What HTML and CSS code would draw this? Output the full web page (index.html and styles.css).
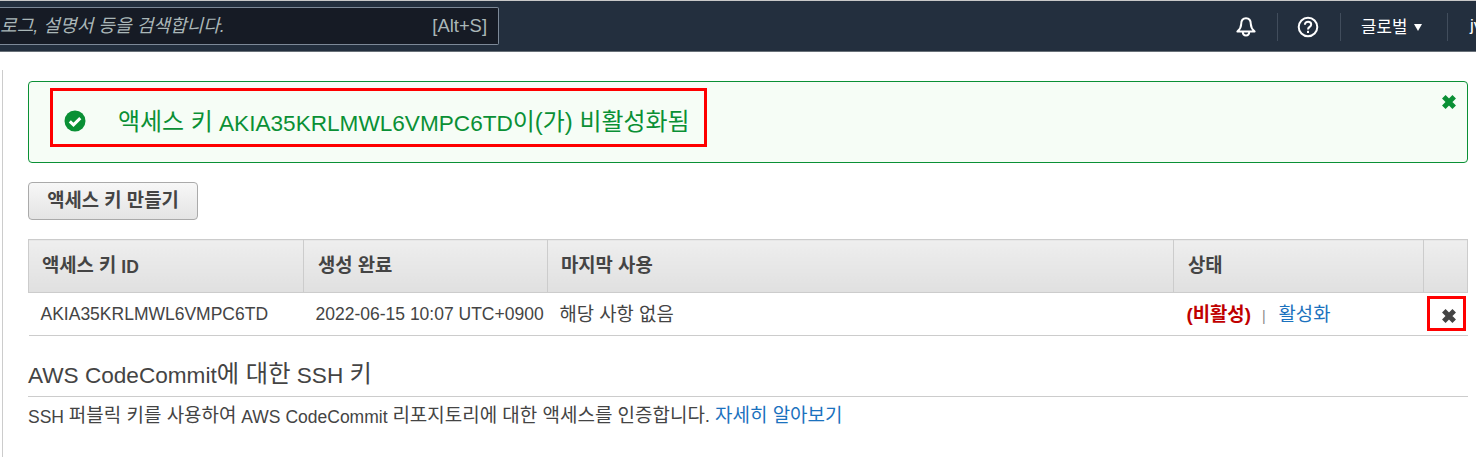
FILE: index.html
```html
<!DOCTYPE html>
<html lang="ko">
<head>
<meta charset="utf-8">
<title>액세스 키</title>
<link rel="stylesheet" href="styles.css">
</head>
<body>
<header class="nav">
  <div class="search">
    <em class="search-text">로그, 설명서 등을 검색합니다.</em>
    <span class="search-hint">[Alt+S]</span>
  </div>
  <div class="nav-items">
    <span class="nav-item bell">
      <svg width="22" height="22" viewBox="0 0 22 22" fill="none" stroke="#fff" stroke-width="2"><path d="M11 2.200c-3.300 0-4.800 2.600-4.800 5.800 0 3.200-1 5-3.800 7.500h17.200c-2.800-2.500-3.800-4.300-3.800-7.500 0-3.200-1.500-5.800-4.800-5.800z" stroke-linejoin="round"/><path d="M7.800 15.800c0 2.200 1.400 3.700 3.200 3.700s3.200-1.500 3.200-3.700"/></svg>
    </span>
    <span class="nav-item help">
      <svg width="22" height="22" viewBox="0 0 22 22" fill="none" stroke="#fff"><circle cx="11" cy="11" r="9.300" stroke-width="2"/><path d="M7.900 8.700c0-1.900 1.400-3 3.200-3s3.100 1.100 3.100 2.700c0 2.500-3.200 2.400-3.200 5" stroke-width="2"/><rect x="10" y="14.800" width="2" height="2.200" fill="#fff" stroke="none"/></svg>
    </span>
    <span class="nav-item region"><span class="region-name">글로벌</span><i class="caret"></i></span>
    <span class="nav-item user">jv</span>
  </div>
</header>
<main class="content">
  <section class="alert">
    <div class="alert-msg">
      <svg class="alert-icon" width="22" height="22" viewBox="0 0 22 22"><circle cx="11" cy="11" r="10.500" fill="#0a9035"/><path d="M5.800 11.300l3.700 3.600 6.800-6.800" fill="none" stroke="#fff" stroke-width="3"/></svg>
      <span class="alert-text"><span class="ko">액세스 키</span> AKIA35KRLMWL6VMPC6TD<span class="ko">이(가) 비활성화됨</span></span>
    </div>
    <svg class="x-green" width="16" height="16" viewBox="0 0 16 16"><path d="M2.800 2.800l10.400 10.400M13.200 2.800L2.800 13.200" stroke="#0a9035" stroke-width="5"/></svg>
  </section>
  <button class="btn" type="button">액세스 키 만들기</button>
  <table class="keys">
    <thead>
      <tr>
        <th class="c1"><span class="ko">액세스 키</span> ID</th>
        <th class="c2"><span class="ko">생성 완료</span></th>
        <th class="c3"><span class="ko">마지막 사용</span></th>
        <th class="c4"><span class="ko">상태</span></th>
        <th class="c5"></th>
      </tr>
    </thead>
    <tbody>
      <tr>
        <td>AKIA35KRLMWL6VMPC6TD</td>
        <td>2022-06-15 10:07 UTC+0900</td>
        <td><span class="ko">해당 사항 없음</span></td>
        <td><b class="off ko">(비활성)</b><span class="sep">|</span><a class="link ko">활성화</a></td>
        <td class="del-cell">
          <span class="del"><svg width="16" height="16" viewBox="0 0 16 16"><path d="M2.800 2.800l10.400 10.400M13.200 2.800L2.800 13.200" stroke="#444" stroke-width="5"/></svg></span>
        </td>
      </tr>
    </tbody>
  </table>
  <h2 class="title">AWS CodeCommit<span class="ko">에 대한</span> SSH <span class="ko">키</span></h2>
  <p class="desc">SSH <span class="ko">퍼블릭 키를 사용하여</span> AWS CodeCommit <span class="ko">리포지토리에 대한 액세스를 인증합니다.</span> <a class="link ko">자세히 알아보기</a></p>
</main>
</body>
</html>
```

FILE: styles.css
```css
* { box-sizing: border-box; }
html, body { margin: 0; padding: 0; }
body {
  width: 1476px;
  height: 457px;
  overflow: hidden;
  background: #fff;
  color: #444;
  font-family: "Liberation Sans", "Noto Sans CJK KR", sans-serif;
  font-size: 17.5px;
}
.ko { font-size: 1.075em; vertical-align: 1px; }
.nav {
  height: 52px;
  background: #232f3e;
  border-top: 1px solid #c8c8c8;
  border-bottom: 1px solid #687078;
  display: flex;
  justify-content: space-between;
  align-items: flex-start;
  overflow: hidden;
}
.search {
  width: 499px;
  height: 38px;
  margin-top: 6px;
  background: #161b25;
  border: 1px solid #7d8998;
  border-left: 0;
  border-radius: 0 2px 2px 0;
  display: flex;
  align-items: center;
  justify-content: space-between;
  padding-right: 11px;
  color: #aab7b8;
}
.search-text {
  white-space: nowrap;
  font-size: 18.100px;
  line-height: 30px;
}
.search-hint { font-size: 18.400px; }
.nav-items {
  display: flex;
  align-items: center;
  height: 28px;
  margin-top: 12px;
  color: #fff;
  font-size: 16.800px;
  width: 241px;
}
.nav-item {
  flex: none;
  display: flex;
  align-items: center;
  height: 28px;
  border-right: 1px solid #414d5c;
}
.bell { width: 43px; }
.help { width: 63px; padding-left: 19px; }
.region { width: 107px; padding-left: 20px; white-space: nowrap; }
.region-name { margin-bottom: 2px; }
.user { border-right: 0; padding: 0 0 2px 22px; font-size: 17px; }
.caret {
  display: inline-block;
  margin-left: 7px;
  border-left: 4.500px solid transparent;
  border-right: 4.500px solid transparent;
  border-top: 7px solid #fff;
}
.content {
  margin-top: 18px;
  margin-left: 2px;
  border-left: 1px solid #ccc;
  padding: 11px 8px 0 25px;
  height: 387px;
}
.alert {
  height: 82px;
  background: #f6fdf6;
  border: 1px solid #0a9035;
  border-radius: 4px;
  display: flex;
  justify-content: space-between;
  align-items: flex-start;
  padding: 6px 10px 0 21px;
}
.alert-msg {
  width: 657px;
  height: 59px;
  border: 3px solid #f00;
  display: flex;
  align-items: center;
  padding: 6px 0 0 11px;
  gap: 32px;
  color: #0a9035;
  font-size: 22.600px;
  white-space: nowrap;
}
.alert-text { margin-bottom: 3px; }
.alert-text .ko { font-size: 1.06em; }
.alert-icon { flex: none; }
.x-green { margin-top: 6px; }
.btn {
  display: block;
  width: 170px;
  height: 38px;
  margin: 19px 0 0;
  border: 1px solid #aaa;
  border-radius: 4px;
  background: linear-gradient(#f7f7f7, #e4e4e4);
  color: #444;
  font: bold 18.800px "Liberation Sans", "Noto Sans CJK KR", sans-serif;
  padding: 0 0 5px;
}
.keys {
  width: 100%;
  margin-top: 19px;
  border-collapse: collapse;
  table-layout: fixed;
}
.keys th {
  height: 53px;
  background: linear-gradient(#eeeeee, #e0e0e0);
  border: 1px solid #ccc;
  border-width: 1px 1px 1px 0;
  text-align: left;
  padding: 0 13px 4px;
  font-size: 17.500px;
  color: #444;
}
.keys th.c1 { border-left: 1px solid #ccc; }
.keys th.c2, .keys th.c4 { padding-left: 14px; }
.c1 { width: 275px; }
.c2 { width: 244px; }
.c3 { width: 626px; }
.c4 { width: 250px; }
.keys td {
  height: 43px;
  border-bottom: 1px solid #ccc;
  padding: 0 12px;
  font-size: 17.500px;
  white-space: nowrap;
}
.keys td .ko { vertical-align: 3px; }
.off { color: #c00000; margin-left: 1px; }
.sep { color: #888; margin: 0 13px 0 11px; font-size: 14px; vertical-align: 3px; }
.link { color: #1b72be; }
.keys td.del-cell { padding: 0; position: relative; }
.del {
  position: absolute;
  left: 3px;
  top: 3px;
  width: 39px;
  height: 35px;
  border: 3px solid #f00;
  display: flex;
  align-items: center;
  justify-content: center;
  padding: 4px 0 0 5px;
}
.title {
  margin: 23px 0 0;
  padding-bottom: 5px;
  border-bottom: 1px solid #ccc;
  font-size: 22.600px;
  font-weight: normal;
  line-height: 30px;
  color: #444;
}
.desc {
  margin: 7px 0 0;
  font-size: 17.500px;
  line-height: 24px;
  color: #444;
}
.desc .ko { font-size: 1.085em; }
```
